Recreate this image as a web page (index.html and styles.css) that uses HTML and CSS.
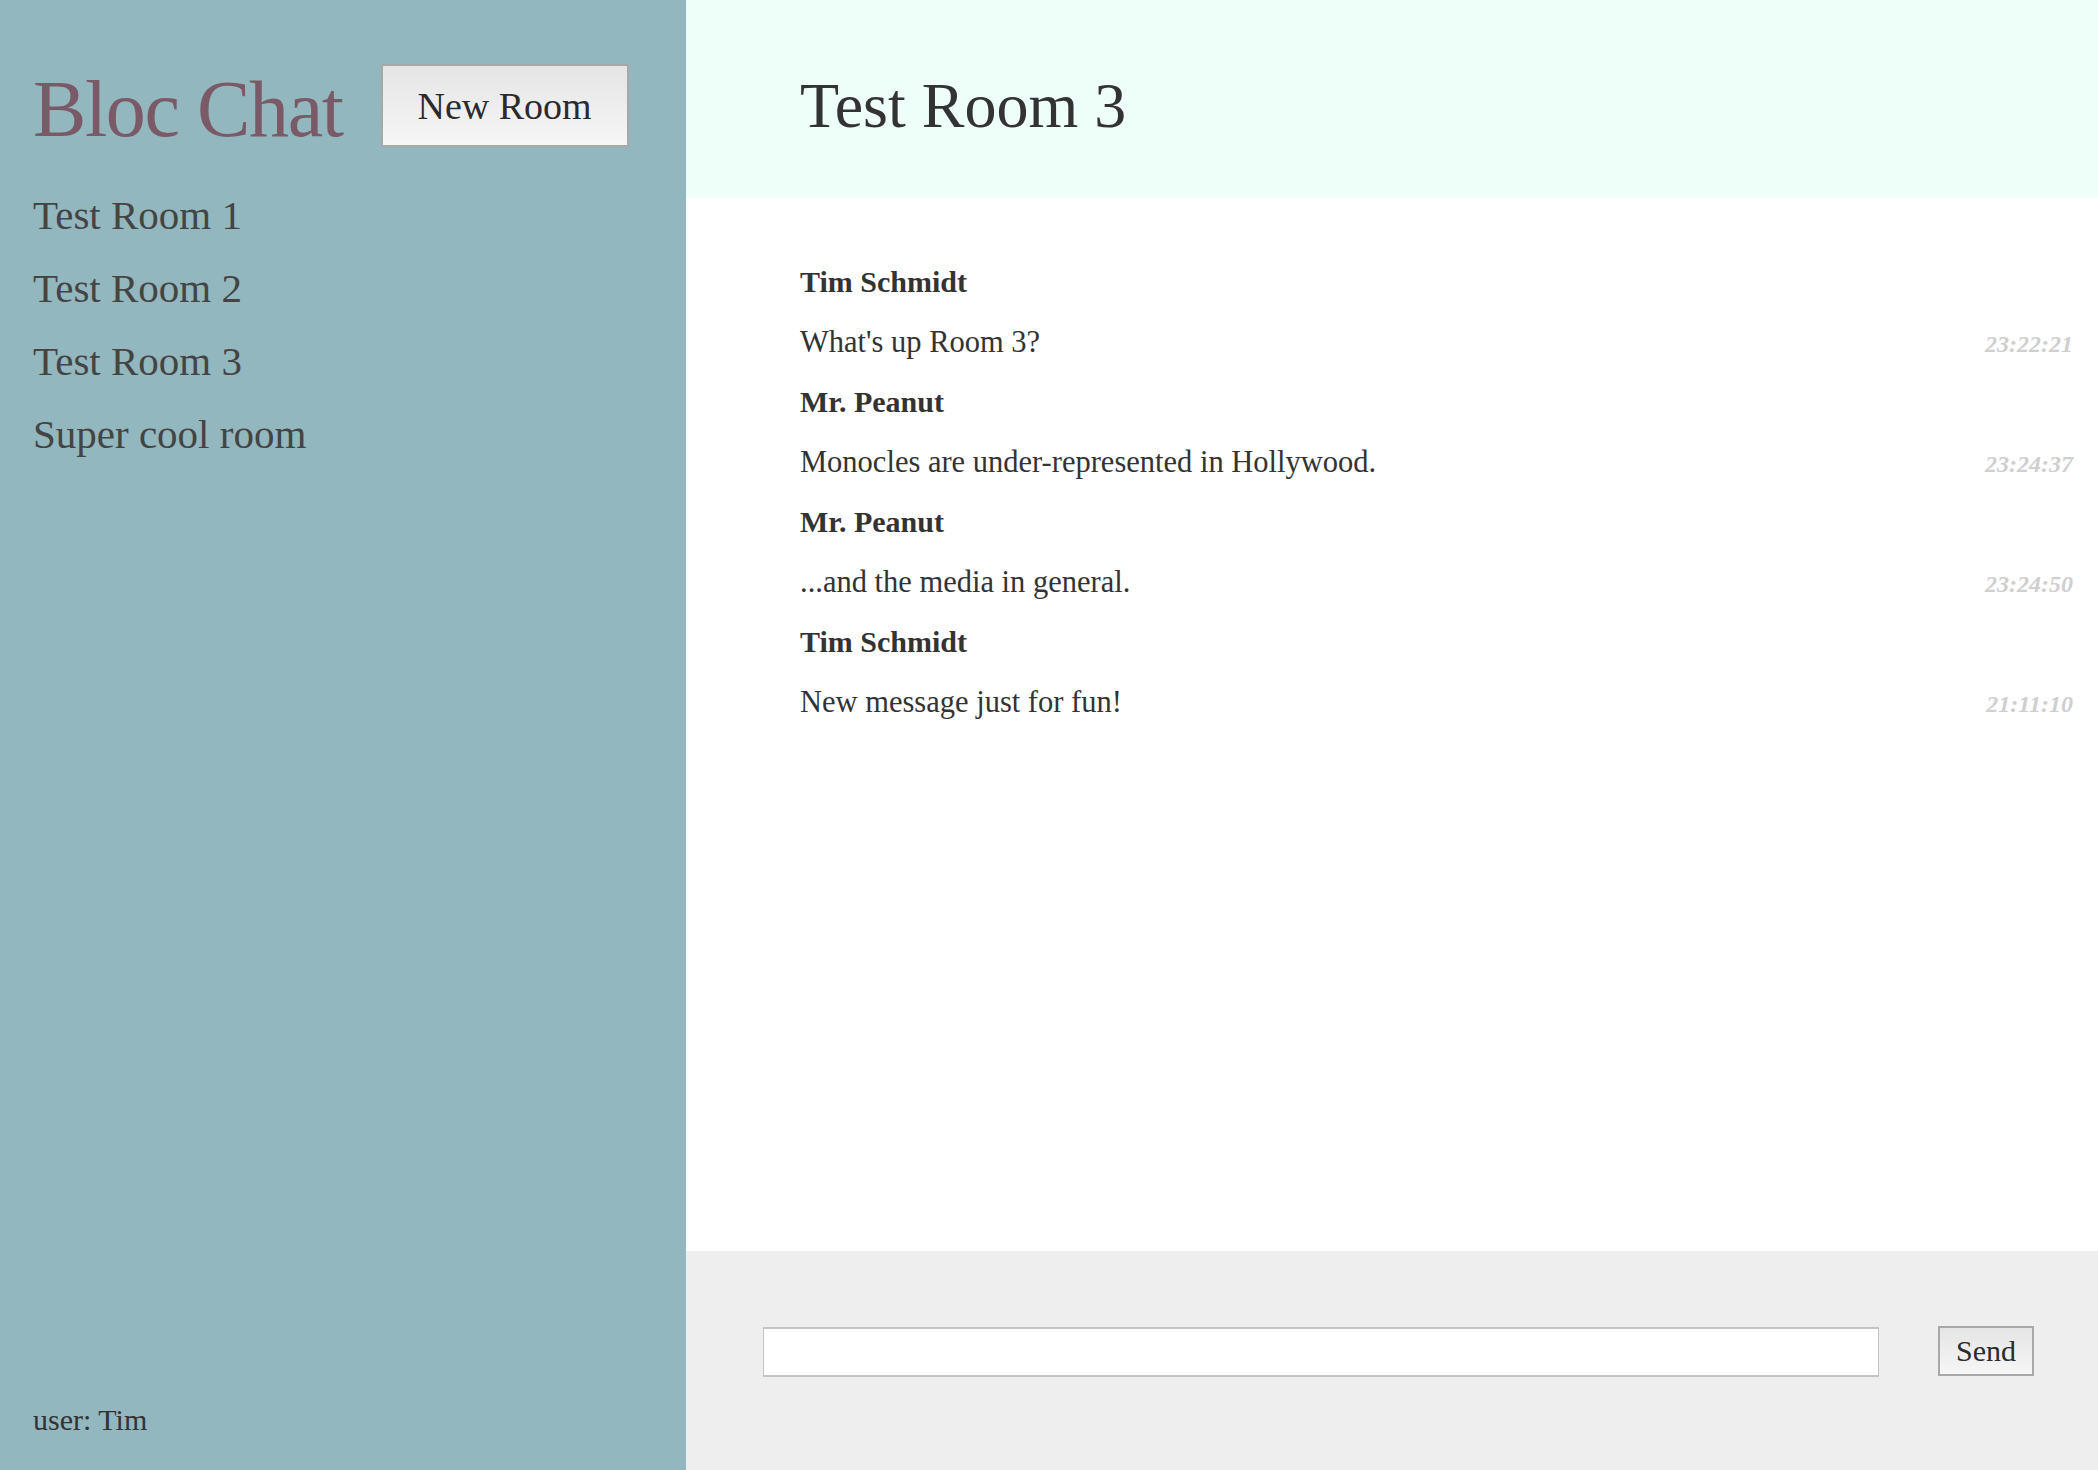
FILE: index.html
```html
<!DOCTYPE html>
<html lang="en">
<head>
<meta charset="utf-8">
<title>Bloc Chat</title>
<link rel="stylesheet" href="styles.css">
</head>
<body>
<div class="app">
  <aside class="sidebar">
    <div class="brand-row">
      <h1 class="brand">Bloc Chat</h1>
      <button class="btn new-room">New Room</button>
    </div>
    <ul class="rooms">
      <li>Test Room 1</li>
      <li>Test Room 2</li>
      <li>Test Room 3</li>
      <li>Super cool room</li>
    </ul>
    <div class="user">user: Tim</div>
  </aside>
  <main class="main">
    <header class="room-header">
      <h2 class="room-title">Test Room 3</h2>
    </header>
    <section class="messages">
      <div class="name">Tim Schmidt</div>
      <div class="msg"><span>What's up Room 3?</span><time>23:22:21</time></div>
      <div class="name">Mr. Peanut</div>
      <div class="msg"><span>Monocles are under-represented in Hollywood.</span><time>23:24:37</time></div>
      <div class="name">Mr. Peanut</div>
      <div class="msg"><span>...and the media in general.</span><time>23:24:50</time></div>
      <div class="name">Tim Schmidt</div>
      <div class="msg"><span>New message just for fun!</span><time>21:11:10</time></div>
    </section>
    <footer class="composer">
      <input class="composer-input" type="text">
      <button class="btn send">Send</button>
    </footer>
  </main>
</div>
</body>
</html>
```
FILE: styles.css
```css
* { box-sizing: border-box; }
html, body { margin: 0; padding: 0; }
body {
  font-family: "Liberation Serif", "Times New Roman", serif;
  color: #333;
  width: 2098px;
  height: 1470px;
  overflow: hidden;
}
.app {
  display: grid;
  grid-template-columns: 686px 1fr;
  height: 1470px;
}
.sidebar {
  background: #92b7bf;
  display: flex;
  flex-direction: column;
  padding: 64px 0 33px 33px;
}
.brand-row {
  display: flex;
  align-items: center;
  gap: 38px;
  height: 83px;
}
.brand {
  margin: 6px 0 0 0;
  font-weight: normal;
  font-size: 80px;
  line-height: 1;
  letter-spacing: -1.4px;
  color: #7a5a66;
}
.btn {
  font-family: "Liberation Serif", "Times New Roman", serif;
  color: #2b2b2b;
  border: 2px solid #a8a8a8;
  background: linear-gradient(#e5e5e5, #f6f6f6);
  padding: 0;
}
.new-room {
  width: 248px;
  height: 83px;
  font-size: 38px;
}
.rooms {
  list-style: none;
  margin: 32px 0 0 0;
  padding: 0;
  color: #444;
  font-size: 41px;
  line-height: 73px;
}
.user {
  margin-top: auto;
  font-size: 30px;
  line-height: 34px;
  color: #333;
}
.main {
  display: flex;
  flex-direction: column;
  background: #fff;
}
.room-header {
  height: 198px;
  background: #eefffa;
  padding: 74px 0 0 114px;
}
.room-title {
  margin: 0;
  font-weight: normal;
  font-size: 64px;
  line-height: 64px;
  color: #333;
}
.messages {
  flex: 1;
  padding: 54px 25px 0 114px;
  font-size: 30.5px;
  line-height: 60px;
  color: #333;
}
.name {
  font-weight: bold;
  font-size: 30px;
  height: 60px;
}
.msg {
  display: flex;
  justify-content: space-between;
  align-items: baseline;
  height: 60px;
}
.msg time {
  font-size: 24px;
  line-height: 24px;
  font-style: italic;
  font-weight: bold;
  color: #cfcfcf;
}
.composer {
  height: 219px;
  background: #eeeeee;
  display: flex;
  align-items: flex-start;
  gap: 59px;
  padding: 75px 64px 0 77px;
}
.composer-input {
  flex: 1;
  height: 50px;
  margin-top: 1px;
  background: #fff;
  border: 2px solid #c4c4c4;
  border-left-width: 1px;
  border-right-width: 1px;
}
.send {
  width: 96px;
  height: 50px;
  font-size: 30px;
}
```
